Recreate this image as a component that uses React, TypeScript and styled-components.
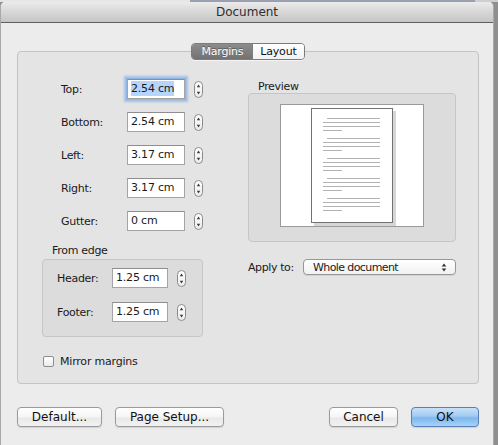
import React from "react";
import styled, { createGlobalStyle } from "styled-components";

const GlobalStyle = createGlobalStyle`
  html, body {
    margin: 0;
    padding: 0;
    background: #9a9a9a;
  }
  body {
    font-family: "DejaVu Sans", "Liberation Sans", sans-serif;
    color: #1a1a1a;
  }
`;

interface ILine {
  size: "full" | "indent" | "short";
}

interface ITab {
  active?: boolean;
}

interface IButton {
  width: number;
  primary?: boolean;
}

const Page = styled.div`
  height: 445px;
  overflow: hidden;
  padding-top: 2px;
  box-sizing: border-box;
  background: linear-gradient(to right, #e6e6e6 0, #e6e6e6 190px, #9aa0b0 190px, #9aa0b0 475px, #cfcfcf 475px);
  background-size: 100% 2px;
  background-repeat: no-repeat;
  background-color: #8f8f8f;
`;

const Window = styled.div`
  width: 494px;
  height: 443px;
  box-sizing: border-box;
  background: #ececec;
  border-left: 1px solid #a9a9a9;
  border-right: 1px solid #a9a9a9;
  border-radius: 5px 5px 0 0;
  overflow: hidden;
`;

const TitleBar = styled.div`
  height: 20px;
  line-height: 20px;
  text-align: center;
  font-size: 12px;
  color: #2e2e2e;
  background: linear-gradient(#ebebeb, #d3d3d3 60%, #c6c6c6);
  border-bottom: 1px solid #5f5f5f;
`;

const Body = styled.div`
  padding: 20px 14px 0 16px;
`;

const TabRow = styled.div`
  display: flex;
  justify-content: center;
  margin-bottom: -9px;
  position: relative;
  z-index: 1;
`;

const Segmented = styled.div`
  display: flex;
  height: 17px;
  border: 1px solid #7c7c7c;
  border-radius: 4px;
  overflow: hidden;
  box-sizing: border-box;
  box-shadow: 0 1px 0 rgba(255, 255, 255, 0.6);
`;

const Tab = styled.div<ITab>`
  font-size: 11px;
  letter-spacing: -0.2px;
  line-height: 15px;
  padding: 0 ${(p) => (p.active ? "9px" : "7px")};
  color: ${(p) => (p.active ? "#fff" : "#111")};
  text-shadow: ${(p) => (p.active ? "0 -1px 0 rgba(0,0,0,0.35)" : "none")};
  background: ${(p) =>
    p.active
      ? "linear-gradient(#8c8c8c, #727272)"
      : "linear-gradient(#ffffff, #f1f1f1)"};
  border-left: ${(p) => (p.active ? "none" : "1px solid #7c7c7c")};
`;

const Panel = styled.div`
  height: 333px;
  box-sizing: border-box;
  border: 1px solid #c3c3c3;
  border-radius: 4px;
  background: #e4e4e4;
  display: flex;
  padding-left: 24px;
`;

const LeftColumn = styled.div`
  width: 161px;
  padding-top: 27px;
  display: flex;
  flex-direction: column;
`;

const MarginRows = styled.div`
  display: flex;
  flex-direction: column;
  gap: 13px;
  padding-left: 19px;
`;

const FieldRow = styled.div<{ labelWidth: number; inputWidth: number }>`
  display: grid;
  grid-template-columns: ${(p) => p.labelWidth}px ${(p) => p.inputWidth}px auto;
  column-gap: 9px;
  align-items: center;
  height: 20px;
`;

const Label = styled.span`
  font-size: 11px;
  letter-spacing: -0.3px;
  white-space: nowrap;
`;

const Field = styled.div<{ focused?: boolean }>`
  height: 20px;
  box-sizing: border-box;
  background: #fff;
  border: 1px solid #a4a4a4;
  border-top-color: #8e8e8e;
  font-size: 11px;
  letter-spacing: -0.2px;
  line-height: 18px;
  padding-left: 3px;
  white-space: nowrap;
  box-shadow: ${(p) =>
    p.focused ? "0 0 0 1px #8fb6e4, 0 0 2px 3px rgba(110, 160, 225, 0.55)" : "none"};
`;

const Selected = styled.span`
  background: #b5d5ff;
  padding: 1px 0;
`;

const GroupTitle = styled.div`
  font-size: 11px;
  letter-spacing: -0.3px;
  line-height: 14px;
  margin-top: 13px;
  padding-left: 10px;
`;

const GroupBox = styled.div`
  margin-top: 1px;
  height: 78px;
  box-sizing: border-box;
  border: 1px solid #c6c6c6;
  border-radius: 4px;
  background: #dcdcdc;
  padding: 8px 0 0 14px;
  display: flex;
  flex-direction: column;
  gap: 14px;
`;

const CheckRow = styled.label`
  display: flex;
  align-items: center;
  gap: 6px;
  margin-top: 18px;
  padding-left: 1px;
  font-size: 11px;
  letter-spacing: -0.2px;
`;

const CheckBox = styled.span`
  width: 11px;
  height: 11px;
  box-sizing: border-box;
  border: 1px solid #8c8c8c;
  border-radius: 2px;
  background: linear-gradient(#ffffff, #ececec);
`;

const RightColumn = styled.div`
  width: 208px;
  margin-left: 45px;
  padding-top: 28px;
  display: flex;
  flex-direction: column;
`;

const PreviewTitle = styled.div`
  font-size: 11px;
  letter-spacing: -0.3px;
  line-height: 13px;
  padding-left: 10px;
`;

const PreviewBox = styled.div`
  height: 149px;
  box-sizing: border-box;
  border: 1px solid #c6c6c6;
  border-radius: 4px;
  background: #dcdcdc;
  display: flex;
  justify-content: center;
  padding-top: 10px;
`;

const PreviewSheet = styled.div`
  width: 144px;
  height: 123px;
  box-sizing: border-box;
  border: 1px solid #9a9a9a;
  background: #fff;
  display: flex;
  align-items: center;
  justify-content: center;
`;

const PageThumb = styled.div`
  width: 82px;
  height: 115px;
  box-sizing: border-box;
  border: 1px solid #727272;
  background: #fff;
  box-shadow: 3px 3px 0 #d6d6d6;
  padding: 9px 0 0 11px;
  display: flex;
  flex-direction: column;
  gap: 7px;
`;

const Paragraph = styled.div`
  display: flex;
  flex-direction: column;
  gap: 3px;
`;

const TextLine = styled.div<ILine>`
  height: 1px;
  background: #b3b3b3;
  width: ${(p) => (p.size === "full" ? 57 : p.size === "indent" ? 53 : 19)}px;
  margin-left: ${(p) => (p.size === "indent" ? 4 : 0)}px;
`;

const ApplyRow = styled.div`
  margin-top: 17px;
  display: flex;
  align-items: center;
`;

const ApplyLabel = styled.span`
  width: 55px;
  font-size: 11px;
  letter-spacing: -0.4px;
`;

const SelectBox = styled.div`
  width: 153px;
  height: 16px;
  box-sizing: border-box;
  border: 1px solid #979797;
  border-radius: 4px;
  background: linear-gradient(#ffffff, #f1f1f1);
  display: flex;
  align-items: center;
  justify-content: space-between;
  padding: 0 8px 0 9px;
  font-size: 11px;
  letter-spacing: -0.6px;
  box-shadow: 0 1px 0 rgba(0, 0, 0, 0.08);
`;

const ButtonRow = styled.div`
  margin-top: 23px;
  display: flex;
  justify-content: space-between;
`;

const ButtonGroup = styled.div`
  display: flex;
  gap: 13px;
`;

const Button = styled.div<IButton>`
  width: ${(p) => p.width}px;
  height: 20px;
  box-sizing: border-box;
  border: 1px solid ${(p) => (p.primary ? "#5b7fb5" : "#9a9a9a")};
  border-radius: 4px;
  text-align: center;
  font-size: 12px;
  line-height: 18px;
  color: #111;
  background: ${(p) =>
    p.primary
      ? "linear-gradient(#c9e1f8, #a2cbf2 45%, #7db7ee 55%, #a6d3fa)"
      : "linear-gradient(#ffffff, #f5f5f5 50%, #e9e9e9 55%, #f2f2f2)"};
  box-shadow: 0 1px 1px rgba(0, 0, 0, 0.12);
`;

const Stepper: React.FC = () => (
  <svg width="9" height="17" viewBox="0 0 9 17">
    <defs>
      <linearGradient id="stp" x1="0" y1="0" x2="0" y2="1">
        <stop offset="0" stopColor="#ffffff" />
        <stop offset="1" stopColor="#ececec" />
      </linearGradient>
    </defs>
    <rect x="0.5" y="0.5" width="8" height="16" rx="4" fill="url(#stp)" stroke="#8a8a8a" />
    <path d="M4.5 3.6 L6.2 6.2 L2.8 6.2 Z" fill="#3a3a3a" />
    <path d="M4.5 13.4 L6.2 10.8 L2.8 10.8 Z" fill="#3a3a3a" />
  </svg>
);

const UpDown: React.FC = () => (
  <svg width="6" height="9" viewBox="0 0 6 9">
    <path d="M3 0.5 L5.3 3.5 L0.7 3.5 Z" fill="#333" />
    <path d="M3 8.5 L5.3 5.5 L0.7 5.5 Z" fill="#333" />
  </svg>
);

const margins = [
  { label: "Top:", value: "2.54 cm", focused: true },
  { label: "Bottom:", value: "2.54 cm" },
  { label: "Left:", value: "3.17 cm" },
  { label: "Right:", value: "3.17 cm" },
  { label: "Gutter:", value: "0 cm" },
];

const edges = [
  { label: "Header:", value: "1.25 cm" },
  { label: "Footer:", value: "1.25 cm" },
];

const App: React.FC = () => {
  return (
    <Page>
      <GlobalStyle />
      <Window>
        <TitleBar>Document</TitleBar>
        <Body>
          <TabRow>
            <Segmented>
              <Tab active>Margins</Tab>
              <Tab>Layout</Tab>
            </Segmented>
          </TabRow>
          <Panel>
            <LeftColumn>
              <MarginRows>
                {margins.map((m) => (
                  <FieldRow key={m.label} labelWidth={57} inputWidth={58}>
                    <Label>{m.label}</Label>
                    <Field focused={m.focused}>
                      {m.focused ? <Selected>{m.value}</Selected> : m.value}
                    </Field>
                    <Stepper />
                  </FieldRow>
                ))}
              </MarginRows>
              <GroupTitle>From edge</GroupTitle>
              <GroupBox>
                {edges.map((e) => (
                  <FieldRow key={e.label} labelWidth={46} inputWidth={56}>
                    <Label>{e.label}</Label>
                    <Field>{e.value}</Field>
                    <Stepper />
                  </FieldRow>
                ))}
              </GroupBox>
              <CheckRow>
                <CheckBox />
                Mirror margins
              </CheckRow>
            </LeftColumn>
            <RightColumn>
              <PreviewTitle>Preview</PreviewTitle>
              <PreviewBox>
                <PreviewSheet>
                  <PageThumb>
                    {[0, 1, 2, 3, 4].map((i) => (
                      <Paragraph key={i}>
                        <TextLine size="indent" />
                        <TextLine size="full" />
                        <TextLine size="full" />
                        <TextLine size="short" />
                      </Paragraph>
                    ))}
                  </PageThumb>
                </PreviewSheet>
              </PreviewBox>
              <ApplyRow>
                <ApplyLabel>Apply to:</ApplyLabel>
                <SelectBox>
                  <span>Whole document</span>
                  <UpDown />
                </SelectBox>
              </ApplyRow>
            </RightColumn>
          </Panel>
          <ButtonRow>
            <ButtonGroup>
              <Button width={85}>Default...</Button>
              <Button width={109}>Page Setup...</Button>
            </ButtonGroup>
            <ButtonGroup>
              <Button width={69}>Cancel</Button>
              <Button width={68} primary>
                OK
              </Button>
            </ButtonGroup>
          </ButtonRow>
        </Body>
      </Window>
    </Page>
  );
};

export default App;
